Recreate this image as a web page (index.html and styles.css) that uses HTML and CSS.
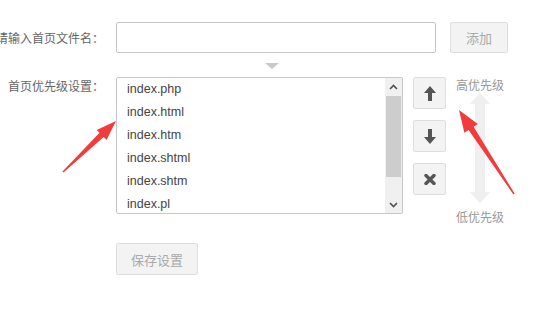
FILE: index.html
```html
<!DOCTYPE html>
<html lang="zh-CN">
<head>
    <meta charset="UTF-8">
    <meta name="viewport" content="width=device-width, initial-scale=1.0">
    <title>默认首页设置</title>
    <link rel="stylesheet" href="styles.css">
</head>
<body>
    <div class="settings">
        <div class="row row-add">
            <label class="label" for="index-name"><span>请输入首页文件名：</span></label>
            <input type="text" id="index-name" class="text-input">
            <button class="btn btn-add">添加</button>
        </div>

        <div class="hint"><span class="hint-arrow"></span></div>

        <div class="row row-list">
            <label class="label"><span>首页优先级设置：</span></label>
            <div class="listbox">
                <ul class="items">
                    <li>index.php</li>
                    <li>index.html</li>
                    <li>index.htm</li>
                    <li>index.shtml</li>
                    <li>index.shtm</li>
                    <li>index.pl</li>
                </ul>
                <div class="scrollbar">
                    <div class="scroll-btn">
                        <svg width="9" height="6" viewBox="0 0 9 6"><path d="M1 5 L4.5 1.5 L8 5" fill="none" stroke="#505050" stroke-width="1.6"/></svg>
                    </div>
                    <div class="track"><div class="thumb"></div></div>
                    <div class="scroll-btn">
                        <svg width="9" height="6" viewBox="0 0 9 6"><path d="M1 1 L4.5 4.5 L8 1" fill="none" stroke="#505050" stroke-width="1.6"/></svg>
                    </div>
                </div>
            </div>

            <div class="order-btns">
                <button class="btn btn-icon" title="上移">
                    <svg width="12" height="15" viewBox="0 0 12 15"><path d="M6 0 L12 7 L8 7 L8 15 L4 15 L4 7 L0 7 Z" fill="#555"/></svg>
                </button>
                <button class="btn btn-icon" title="下移">
                    <svg width="12" height="15" viewBox="0 0 12 15"><path d="M6 15 L12 8 L8 8 L8 0 L4 0 L4 8 L0 8 Z" fill="#555"/></svg>
                </button>
                <button class="btn btn-icon" title="删除">
                    <svg width="12" height="11" viewBox="0 0 12 11"><path d="M2 1.5 L10 9.5 M10 1.5 L2 9.5" stroke="#555" stroke-width="3.4" stroke-linecap="round"/></svg>
                </button>
            </div>

            <div class="priority">
                <span>高优先级</span>
                <svg class="priority-arrow" width="20" height="110" viewBox="0 0 20 110">
                    <path d="M10 0 L20 11 L15 11 L15 99 L20 99 L10 110 L0 99 L5 99 L5 11 L0 11 Z" fill="#efefef"/>
                </svg>
                <span>低优先级</span>
            </div>
        </div>

        <div class="row row-save">
            <span class="label"></span>
            <button class="btn btn-save">保存设置</button>
        </div>
    </div>

    <!-- annotation arrows drawn over the screenshot -->
    <svg class="marks" width="556" height="311" viewBox="0 0 556 311">
        <polygon points="116,121 106.5,139.9 103.7,137.1 63.5,172.5 62.5,171.5 99.5,132.7 96.7,129.9" fill="#f23b3b"/>
        <polygon points="459,110 477.8,124 473.6,126.8 514.6,193.6 513.4,194.4 468.6,130 464.4,132.8" fill="#f23b3b"/>
    </svg>
</body>
</html>
```

FILE: styles.css
```css
body {
    margin: 0;
    padding: 0;
    background: #fff;
    font-family: "Noto Sans CJK SC", "Liberation Sans", sans-serif;
    font-size: 12px;
    color: #666;
    overflow: hidden;
}
.settings {
    padding-top: 22px;
}
.row {
    display: flex;
}
.row-add {
    align-items: center;
}
.label {
    width: 104px;
    margin-right: 12px;
    flex-shrink: 0;
    display: flex;
    justify-content: flex-end;
    white-space: nowrap;
    line-height: 16px;
    color: #666;
}
.text-input {
    width: 320px;
    height: 31px;
    box-sizing: border-box;
    border: 1px solid #c8c8c8;
    border-radius: 2px;
    padding: 0 8px;
    margin: 0;
}
.btn {
    box-sizing: border-box;
    background: #f3f3f3;
    border: 1px solid #dedede;
    border-radius: 2px;
    color: #aaa;
    font-family: "Noto Sans CJK SC", sans-serif;
    font-size: 13px;
    padding: 0;
    margin: 0;
    cursor: pointer;
}
.btn-add {
    width: 58px;
    height: 31px;
    margin-left: 14px;
}
.hint {
    height: 24px;
    padding-left: 265px;
    box-sizing: border-box;
    padding-top: 10px;
}
.hint-arrow {
    display: block;
    width: 0;
    height: 0;
    border-left: 7px solid transparent;
    border-right: 7px solid transparent;
    border-top: 6px solid #c9c9c9;
}
.row-list .label {
    padding-top: 1px;
    align-self: flex-start;
}
.listbox {
    display: flex;
    width: 287px;
    height: 137px;
    box-sizing: border-box;
    border: 1px solid #c8c8c8;
    border-radius: 2px;
    overflow: hidden;
}
.items {
    flex: 1;
    list-style: none;
    margin: 0;
    padding: 0;
    overflow: hidden;
    font-family: "Liberation Sans", Arial, sans-serif;
    font-size: 12.5px;
    color: #444;
}
.items li {
    height: 23px;
    line-height: 23px;
    padding-left: 10px;
}
.scrollbar {
    width: 17px;
    display: flex;
    flex-direction: column;
    background: #f0f0f0;
}
.scroll-btn {
    height: 17px;
    display: flex;
    align-items: center;
    justify-content: center;
}
.track {
    flex: 1;
    padding-top: 1px;
}
.thumb {
    height: 81px;
    background: #cdcdcd;
    margin: 0 1px;
}
.order-btns {
    display: flex;
    flex-direction: column;
    gap: 11px;
    margin-left: 10px;
}
.btn-icon {
    width: 33px;
    height: 32px;
    display: flex;
    align-items: center;
    justify-content: center;
}
.priority {
    display: flex;
    flex-direction: column;
    align-items: center;
    margin-left: 10px;
    width: 48px;
    color: #999;
    line-height: 16px;
}
.priority-arrow {
    display: block;
    margin-bottom: 6px;
}
.row-save {
    margin-top: 18px;
}
.btn-save {
    width: 82px;
    height: 32px;
}
.marks {
    position: absolute;
    left: 0;
    top: 0;
    pointer-events: none;
}
```
